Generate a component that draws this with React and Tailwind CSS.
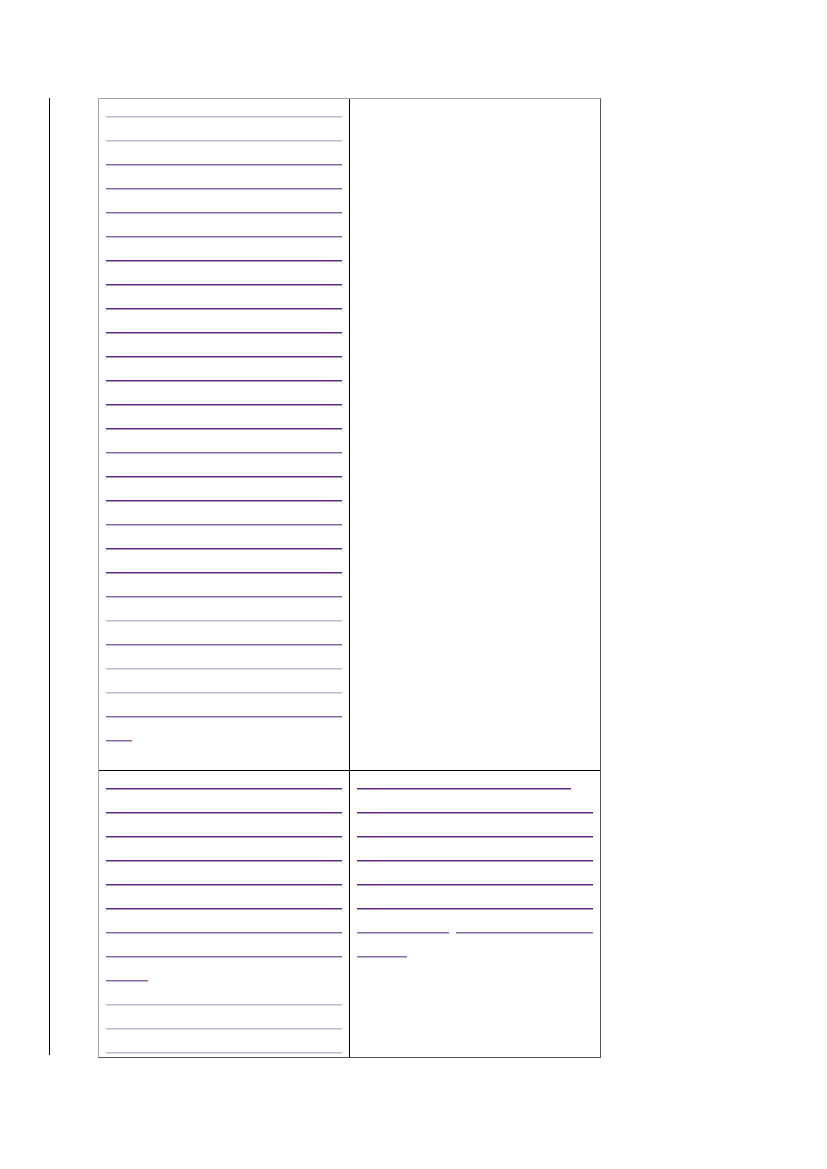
import React from "react";

const tones = {
  d: "bg-[#5f2a82]",
  m: "bg-[#8a68a2]",
  l: "bg-[#c8b5d5]",
};

// each entry is a list of [tone, width] segments; two segments make a split line
const topLeft = [
  "l", "l", "m", "m", "m", "m", "d", "d", "d", "d", "d", "d", "d",
  "d", "m", "d", "d", "m", "d", "d", "m", "l", "m", "l", "l", "m",
].map((t) => [[t, 236]]).concat([[["m", 26]]]);

const bottomLeft = [
  [["d", 236]], [["d", 236]], [["d", 236]], [["d", 236]],
  [["d", 236]], [["d", 236]], [["m", 236]], [["m", 236]],
  [["m", 42]],
  [["l", 236]], [["l", 236]], [["l", 236]],
];

const bottomRight = [
  [["d", 214]], [["d", 236]], [["d", 236]], [["d", 236]],
  [["d", 236]], [["d", 236]],
  [["m", 92], ["m", 137]],
  [["m", 50]],
];

const Line = ({ segments }) => (
  <div className="flex gap-[7px]">
    {segments.map(([tone, w], i) => (
      <div
        key={i}
        className={`h-[2px] ${tones[tone]} border-b border-white/50`}
        style={{ width: w }}
      />
    ))}
  </div>
);

const Cell = ({ lines, className = "" }) => (
  <div className={`flex flex-col gap-[22px] pt-[17px] pl-[7px] ${className}`}>
    {lines.map((segments, i) => (
      <Line key={i} segments={segments} />
    ))}
  </div>
);

export default function App() {
  return (
    <div className="min-h-[1169px] w-[827px] bg-white pt-[98px]">
      <div className="flex items-start">
        <div className="ml-[49px] h-[957px] w-px bg-black" />
        <div className="ml-[48px] grid w-[503px] grid-cols-[251px_250px] border border-t-[#a3a3a3] border-l-[#a3a3a3] border-r-[#555555] border-b-[#555555]">
          <Cell lines={topLeft} className="border-r border-b border-black pb-[28px]" />
          <div className="border-b border-black" />
          <Cell lines={bottomLeft} className="border-r border-black pb-[3px]" />
          <Cell lines={bottomRight} />
        </div>
      </div>
    </div>
  );
}
